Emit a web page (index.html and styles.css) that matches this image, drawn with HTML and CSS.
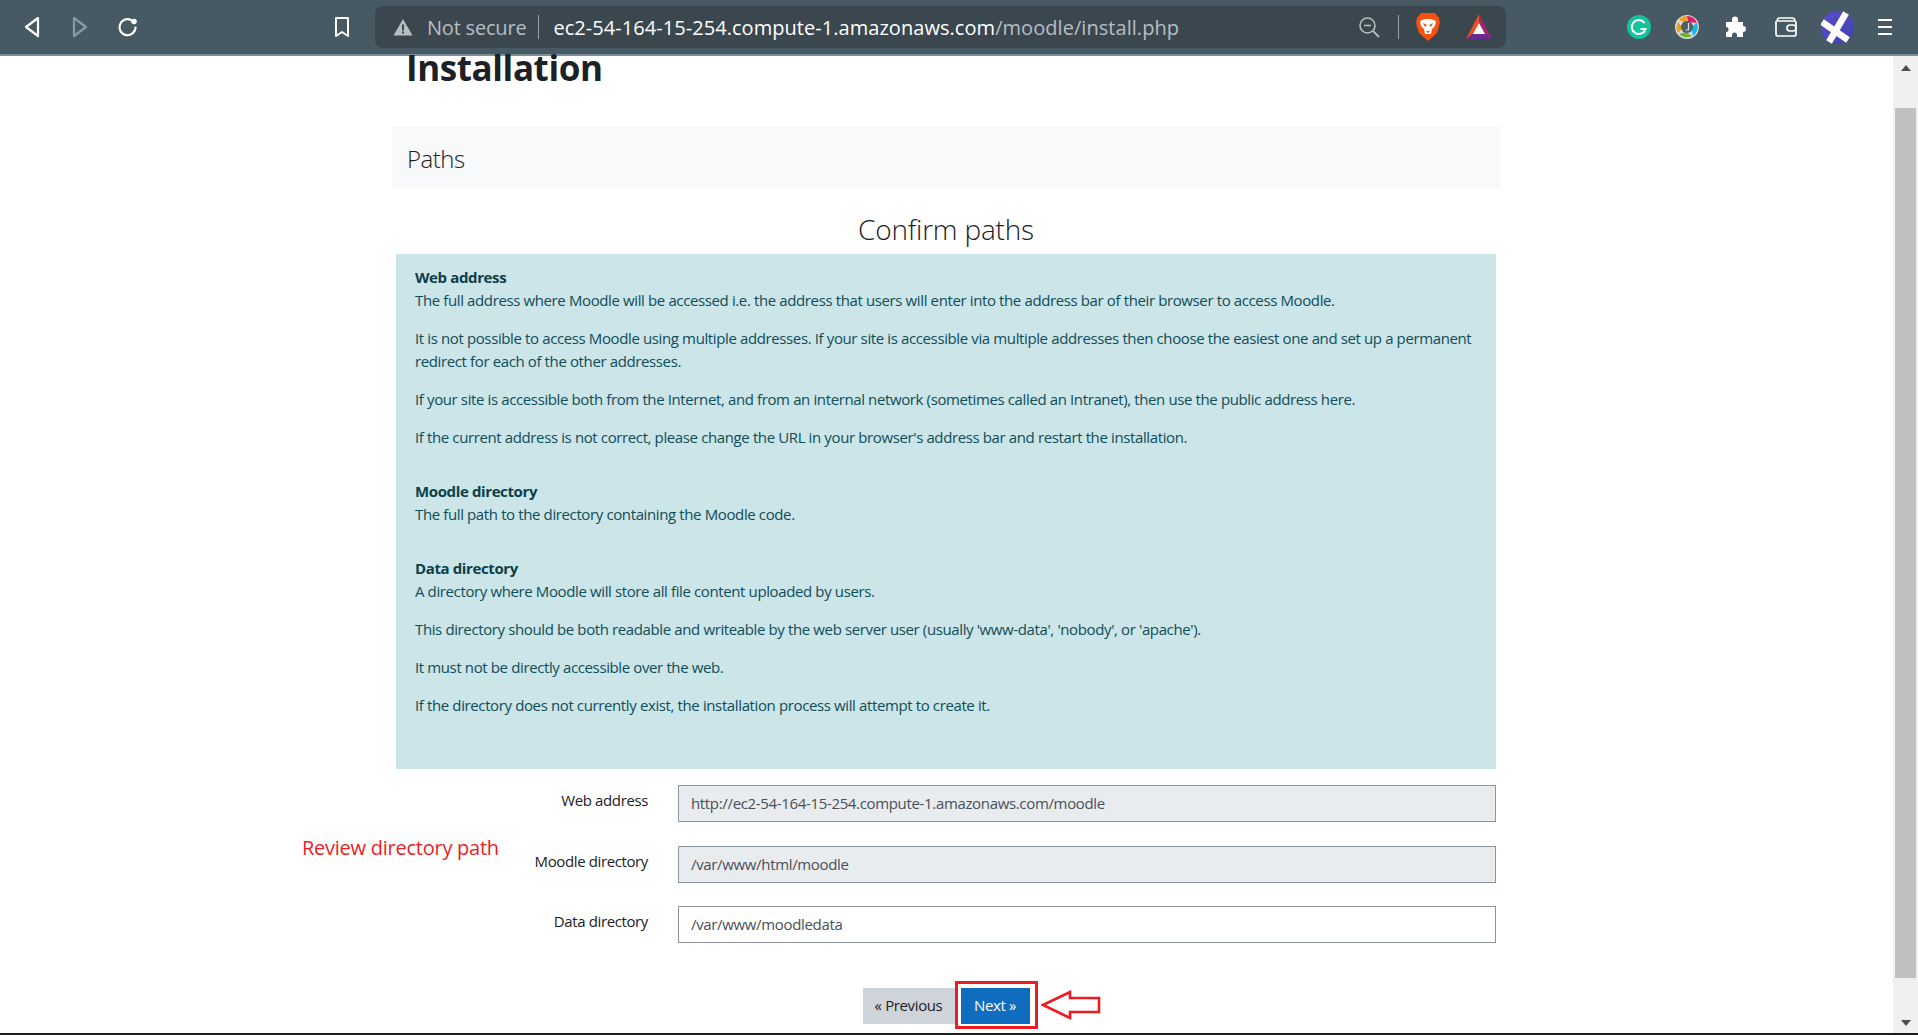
FILE: index.html
```html
<!DOCTYPE html>
<html lang="en">
<head>
    <meta charset="UTF-8">
    <title>Installation</title>
    <link rel="stylesheet" href="styles.css">
</head>
<body>

    <!-- Browser toolbar -->
    <header class="toolbar">
        <div class="nav-buttons">
            <svg class="icon" width="24" height="24" viewBox="0 0 24 24"><path d="M18 3 L6 12 L18 21 Z" fill="none" stroke="#fff" stroke-width="2.2" stroke-linejoin="round"/></svg>
            <svg class="icon" width="24" height="24" viewBox="0 0 24 24"><path d="M6 3 L18 12 L6 21 Z" fill="none" stroke="#8b9aa2" stroke-width="2.2" stroke-linejoin="round"/></svg>
            <svg class="icon" width="24" height="24" viewBox="0 0 24 24"><path d="M19.5 12.5 A8 8 0 1 1 15 5" fill="none" stroke="#fff" stroke-width="2.2" stroke-linecap="round"/><circle cx="18" cy="6.5" r="2.8" fill="#fff"/></svg>
        </div>
        <svg class="icon bookmark" width="18" height="22" viewBox="0 0 18 22"><path d="M3 2 H15 V20 L9 16 L3 20 Z" fill="none" stroke="#fff" stroke-width="2" stroke-linejoin="round"/></svg>

        <div class="address-bar">
            <svg class="warn" width="20" height="18" viewBox="0 0 20 18"><path d="M10 1 L19.5 17.5 H0.5 Z" fill="#b7bec2"/><rect x="9" y="6.5" width="2" height="6" fill="#3a474f"/><rect x="9" y="13.5" width="2" height="2" fill="#3a474f"/></svg>
            <span class="not-secure">Not secure</span>
            <span class="divider"></span>
            <span class="url"><span class="url-host">ec2-54-164-15-254.compute-1.amazonaws.com</span>/moodle/install.php</span>
            <span class="address-right">
                <svg width="22" height="22" viewBox="0 0 22 22"><circle cx="9.5" cy="9.5" r="7.5" fill="none" stroke="#b7bec2" stroke-width="1.6"/><path d="M15 15 L21 21" stroke="#b7bec2" stroke-width="1.8"/><path d="M6 9.5 H13" stroke="#b7bec2" stroke-width="1.6"/></svg>
                <span class="divider"></span>
                <svg class="brave" width="26" height="30" viewBox="0 0 26 30"><path d="M6 1 H20 L24 6 L25 11 L22 21 L13 29 L4 21 L1 11 L2 6 Z" fill="#f9500f"/><path d="M5 9 L10 7 H16 L21 9 L20 14 L17 17 L16 22 H10 L9 17 L6 14 Z" fill="#fff"/><path d="M8 11 L12 13 L10 15 Z M18 11 L14 13 L16 15 Z M11 19 H15 L13 21 Z" fill="#f9500f"/></svg>
                <svg class="bat" width="28" height="26" viewBox="0 0 28 26"><path d="M14 0 L1 25 H14 Z" fill="#f04e23"/><path d="M14 0 L27 25 H14 Z" fill="#a3256b"/><path d="M1 25 L7 20 H21 L27 25 Z" fill="#662d91"/><path d="M14 9 L20 20 H8 Z" fill="#fff"/></svg>
            </span>
        </div>

        <div class="extensions">
            <svg class="ext-grammarly" width="24" height="24" viewBox="0 0 24 24"><circle cx="12" cy="12" r="12" fill="#15c39a"/><path d="M17.5 8 A7 7 0 1 0 18.5 14 H13.5 M18.5 14 L16.5 18" fill="none" stroke="#fff" stroke-width="2"/></svg>
            <svg class="ext-colors" width="24" height="24" viewBox="0 0 24 24"><circle cx="12" cy="12" r="12" fill="#d8dcdc"/><path d="M4 5 A11 11 0 0 1 12 1 L11 8 Z" fill="#f79a1e"/><path d="M12 1 A11 11 0 0 1 22 8 L13 7 Z" fill="#e5195f"/><path d="M22 8 A11 11 0 0 1 18 21 L16 12 Z" fill="#14b9e8"/><path d="M17 21 A11 11 0 0 1 4 19 L11 17 Z" fill="#6db52d"/><path d="M3 18 A11 11 0 0 1 3 7 L8 13 Z" fill="#e8a21c"/><circle cx="12" cy="12" r="6" fill="#4f5f66"/><path d="M13.5 8 V15 H10.5" fill="none" stroke="#dfe3e3" stroke-width="1.2"/></svg>
            <svg class="ext-puzzle" width="24" height="24" viewBox="0 0 24 24"><path d="M2 7 H8 V4.5 A3 3 0 0 1 14 4.5 V7 H19 V11 A3 3 0 0 1 19 17 V22 H13 V20 A2.5 2.5 0 0 0 8 20 V22 H2 V17 A2.5 2.5 0 0 0 2 12 Z" fill="#fff"/></svg>
            <svg class="ext-wallet" width="24" height="22" viewBox="0 0 24 22"><path d="M3 5 Q3 2 6 2 H18 Q21 2 21 5 M2 5 V18 Q2 20 4 20 H20 Q22 20 22 18 V7 Q22 5 20 5 H3" fill="none" stroke="#fff" stroke-width="1.7"/><rect x="13" y="9" width="9" height="6" rx="3" fill="#475963" stroke="#fff" stroke-width="1.7"/></svg>
            <svg class="ext-x" width="33" height="33" viewBox="0 0 33 33"><defs><linearGradient id="xfill" x1="0" y1="0" x2="1" y2="1"><stop offset="0" stop-color="#5b4bd0"/><stop offset="1" stop-color="#3c45a8"/></linearGradient></defs><circle cx="16.5" cy="16.5" r="16.5" fill="url(#xfill)"/><path d="M25 2 L8 31 M1 11 L27 29" stroke="#fff" stroke-width="6.5"/></svg>
            <svg class="ext-menu" width="14" height="18" viewBox="0 0 14 18"><path d="M0 2 H14 M0 9 H14 M0 16 H14" stroke="#fff" stroke-width="2.2"/></svg>
        </div>
    </header>

    <div class="viewport">
        <main class="page">
            <h1 class="site-title">Installation</h1>

            <section class="paths-section">
                <h2 class="section-title">Paths</h2>
                <h3 class="confirm-title">Confirm paths</h3>

                <div class="alert-box">
                    <div class="help-block">
                        <strong>Web address</strong><br>
                        <p>The full address where Moodle will be accessed i.e. the address that users will enter into the address bar of their browser to access Moodle.</p>
                        <p>It is not possible to access Moodle using multiple addresses. If your site is accessible via multiple addresses then choose the easiest one and set up a permanent redirect for each of the other addresses.</p>
                        <p>If your site is accessible both from the Internet, and from an internal network (sometimes called an Intranet), then use the public address here.</p>
                        <p>If the current address is not correct, please change the URL in your browser's address bar and restart the installation.</p>
                    </div>
                    <div class="help-block">
                        <strong>Moodle directory</strong><br>
                        <p>The full path to the directory containing the Moodle code.</p>
                    </div>
                    <div class="help-block">
                        <strong>Data directory</strong><br>
                        <p>A directory where Moodle will store all file content uploaded by users.</p>
                        <p>This directory should be both readable and writeable by the web server user (usually 'www-data', 'nobody', or 'apache').</p>
                        <p>It must not be directly accessible over the web.</p>
                        <p>If the directory does not currently exist, the installation process will attempt to create it.</p>
                    </div>
                </div>

                <div class="path-form">
                    <span class="annotation-text">Review directory path</span>
                    <div class="form-row">
                        <label>Web address</label>
                        <input type="text" value="http://ec2-54-164-15-254.compute-1.amazonaws.com/moodle" readonly>
                    </div>
                    <div class="form-row">
                        <label>Moodle directory</label>
                        <input type="text" value="/var/www/html/moodle" readonly>
                    </div>
                    <div class="form-row">
                        <label>Data directory</label>
                        <input class="editable" type="text" value="/var/www/moodledata">
                    </div>
                </div>

                <div class="button-row">
                    <button class="btn-prev">« Previous</button>
                    <button class="btn-next">Next »</button>
                    <span class="annotation-box"></span>
                    <svg class="annotation-arrow" width="60" height="30" viewBox="0 0 60 30"><path d="M2 15 L29 2 V8 H58 V22 H29 V28 Z" fill="#fff" stroke="#ed1c24" stroke-width="2.6"/></svg>
                </div>
            </section>
        </main>

        <!-- Scrollbar -->
        <div class="scrollbar">
            <span class="arrow-up"></span>
            <div class="track"><div class="thumb"></div></div>
            <span class="arrow-down"></span>
        </div>
    </div>

    <div class="bottom-strip"></div>

</body>
</html>
```

FILE: styles.css
```css
html, body {
    margin: 0;
    height: 100%;
    overflow: hidden;
}

body {
    display: flex;
    flex-direction: column;
    background-color: #ffffff;
    color: #1d2125;
    font-family: "Open Sans", "Noto Sans", sans-serif;
}

/* Browser toolbar */
.toolbar {
    flex: none;
    display: flex;
    align-items: center;
    height: 54px;
    border-bottom: 2px solid #7c909a;
    background-color: #475963;
}

.icon {
    display: block;
}

.nav-buttons {
    display: flex;
    gap: 24px;
    margin-left: 20px;
}

.bookmark {
    margin-left: 193px;
}

.address-bar {
    display: flex;
    align-items: center;
    width: 1131px;
    height: 42px;
    margin-left: 24px;
    border-radius: 8px;
    background-color: #3a474f;
    box-sizing: border-box;
    padding-left: 18px;
}

.not-secure {
    margin-left: 14px;
    margin-right: 12px;
    color: #b7bec2;
    font-size: 20px;
    letter-spacing: -0.2px;
}

.divider {
    width: 1px;
    height: 24px;
    background-color: #98a3a9;
}

.url {
    margin-left: 14px;
    color: #b7bec2;
    font-size: 20px;
    letter-spacing: 0.05px;
}

.url-host {
    color: #ffffff;
}

.address-right {
    display: flex;
    align-items: center;
    margin-left: auto;
    margin-right: 13px;
}

.address-right .divider {
    margin-left: 18px;
    margin-right: 16px;
}

.bat {
    margin-left: 24px;
}

.extensions {
    display: flex;
    align-items: center;
    margin-left: 121px;
}

.ext-colors, .ext-puzzle {
    margin-left: 24px;
}

.ext-puzzle {
    margin-left: 25px;
}

.ext-wallet {
    margin-left: 26px;
}

.ext-x {
    margin-left: 23px;
}

.ext-menu {
    margin-left: 24px;
}

/* Page */
.viewport {
    flex: 1;
    display: flex;
    min-height: 0;
}

.page {
    flex: 1;
    min-width: 0;
    box-sizing: border-box;
    padding: 0 393px 0 392px;
    font-size: 15px;
    line-height: 23px;
    letter-spacing: -0.38px;
}

.site-title {
    margin: 0 0 0 14px;
    height: 70px;
    font-size: 35px;
    font-weight: 700;
    line-height: 24px;
    letter-spacing: -0.4px;
}

.section-title {
    margin: 0;
    height: 63px;
    padding-left: 15px;
    background-color: #f8f9fa;
    font-size: 24px;
    font-weight: 300;
    line-height: 66px;
    letter-spacing: -0.5px;
}

.confirm-title {
    margin: 0;
    height: 65px;
    text-align: center;
    font-size: 28px;
    font-weight: 300;
    line-height: 81px;
    letter-spacing: -0.2px;
}

.alert-box {
    height: 515px;
    margin: 0 4px;
    padding: 12px 19px 0;
    box-sizing: border-box;
    background-color: #cce5e9;
    color: #0f4d58;
}

.help-block {
    padding-bottom: 16px;
}

.help-block strong {
    color: #0c3f48;
}

.help-block p {
    margin: 0 0 15px;
}

/* Form rows */
.path-form {
    position: relative;
    margin: 16px 4px 0;
}

.form-row {
    display: flex;
    margin-bottom: 23.5px;
}

.form-row label {
    width: 257px;
    padding-top: 4px;
    text-align: right;
    color: #1d2125;
}

.form-row input {
    flex: none;
    width: 818px;
    height: 37px;
    margin-left: 30px;
    padding: 0 12px 1px;
    box-sizing: border-box;
    border: 1px solid #8f959e;
    background-color: #e9ecef;
    color: #495057;
    font-family: inherit;
    font-size: 15px;
    letter-spacing: -0.34px;
}

.form-row input.editable {
    background-color: #ffffff;
}

.annotation-text {
    position: absolute;
    left: -94px;
    top: 51px;
    color: #ed1c24;
    font-size: 20px;
    letter-spacing: -0.25px;
    white-space: nowrap;
}

/* Buttons */
.button-row {
    position: relative;
    display: flex;
    justify-content: center;
    gap: 6px;
    margin-top: 45px;
}

.button-row button {
    height: 36px;
    padding: 0 0 2px;
    border: none;
    font-family: inherit;
    font-size: 15px;
    letter-spacing: -0.38px;
}

.btn-prev {
    width: 92px;
    background-color: #ced4da;
    color: #1d2125;
}

.btn-next {
    width: 69px;
    background-color: #0f6cbf;
    color: #ffffff;
}

.annotation-box {
    position: absolute;
    left: 563px;
    top: -7px;
    width: 83px;
    height: 48px;
    box-sizing: border-box;
    border: 3px solid #ed1c24;
}

.annotation-arrow {
    position: absolute;
    left: 649px;
    top: 2px;
}

/* Scrollbar */
.scrollbar {
    flex: none;
    display: flex;
    flex-direction: column;
    align-items: center;
    width: 25px;
    background-color: #f0f0f0;
}

.arrow-up, .arrow-down {
    flex: none;
    width: 0;
    height: 0;
    border-left: 5px solid transparent;
    border-right: 5px solid transparent;
}

.arrow-up {
    margin: 9px 0 14px;
    border-bottom: 6px solid #505050;
}

.arrow-down {
    margin: 19px 0 7px;
    border-top: 6px solid #505050;
}

.track {
    flex: 1;
    width: 100%;
    box-sizing: border-box;
    padding: 23px 2px 0;
}

.thumb {
    height: 870px;
    background-color: #c0c0c0;
}

.bottom-strip {
    flex: none;
    height: 2px;
    background-color: #1d1d1d;
}
```
